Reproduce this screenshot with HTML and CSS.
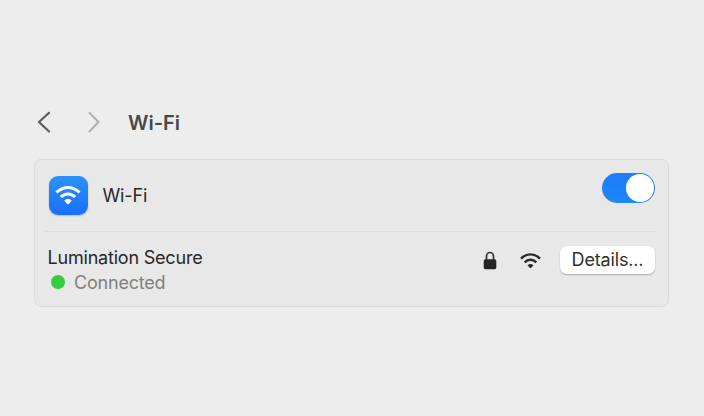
FILE: index.html
```html
<!DOCTYPE html>
<html lang="en">
<head>
<meta charset="utf-8">
<title>Wi-Fi</title>
<link rel="stylesheet" href="styles.css">
</head>
<body>
<main class="pane">
  <header class="header">
    <svg class="chevron" viewBox="0 0 14 22"><path d="M12 1.800 2 11l10 9.500"/></svg>
    <svg class="chevron forward" viewBox="0 0 14 22"><path d="M2.500 1.800 11.500 11 2.500 20.500"/></svg>
    <h1 class="title">Wi-Fi</h1>
  </header>
  <section class="card">
    <div class="row power">
      <div class="app-icon">
        <svg class="wifi" viewBox="0 0 26 20"><path d="M1.500 7.500C8 .7 18 .7 24.500 7.500M5.800 12C10 7.900 16 7.900 20.200 12"/><path class="fill" d="M9.300 15.500Q13 12.200 16.700 15.500L13.900 18.900Q13 19.700 12.100 18.900Z"/></svg>
      </div>
      <span class="label">Wi-Fi</span>
      <div class="toggle"><div class="knob"></div></div>
    </div>
    <div class="row network">
      <div class="info">
        <div class="name">Lumination Secure</div>
        <div class="status"><span class="dot"></span><span class="state">Connected</span></div>
      </div>
      <svg class="lock" viewBox="0 0 14 19"><path d="M3.500 9V5.200a3.500 3.700 0 0 1 7 0V9"/><rect x=".7" y="8.300" width="12.600" height="10" rx="1.700"/></svg>
      <svg class="wifi signal" viewBox="0 0 26 20"><path d="M1.300 7.700C8 .7 18 .7 24.700 7.700M5.800 12.300C10 8 16 8 20.200 12.300"/><path class="fill" d="M9.300 15.900Q13 12.500 16.700 15.900L13.900 19.100Q13 19.900 12.100 19.100Z"/></svg>
      <button class="details">Details...</button>
    </div>
  </section>
</main>
</body>
</html>
```

FILE: styles.css
```css
* { box-sizing: border-box; }
body {
  margin: 0;
  background: #ededed;
  color: #272727;
  font-family: Inter, "Liberation Sans", sans-serif;
}
.pane { width: 704px; height: 416px; padding: 107px 35px 0 33.5px; }
.header { display: flex; align-items: center; height: 30px; padding-left: 3.5px; }
.chevron {
  width: 14px;
  height: 22px;
  fill: none;
  stroke: #5c5c5c;
  stroke-width: 2.2;
  stroke-linecap: round;
  stroke-linejoin: round;
}
.forward { margin-left: 36px; stroke: #adadad; stroke-width: 1.9; }
.title { margin: 2px 0 0 27px; font-size: 20px; line-height: 28px; font-weight: 600; color: #484848; }
.card {
  height: 148px;
  margin-top: 22px;
  padding: 0 12.5px 0 10.5px;
  background: #e8e8e8;
  border: 1px solid #dbdbdb;
  border-radius: 7px;
}
.row { display: flex; }
.power { height: 72px; padding: 13px .5px 0 3.5px; border-bottom: 1px solid #dcdcdc; }
.app-icon {
  display: flex;
  align-items: center;
  justify-content: center;
  width: 39px;
  height: 39px;
  margin-top: 2.5px;
  border-radius: 9px;
  background: linear-gradient(#2b91fb, #1a70fa);
  box-shadow: 0 1px 2px #0003;
}
.wifi { width: 26px; height: 20px; fill: none; stroke: #fff; stroke-width: 3; stroke-linecap: butt; }
.app-icon .wifi { margin-top: -1px; }
.wifi .fill { fill: #fff; stroke: none; }
.label { margin: 9px auto 0 15px; font-size: 18px; line-height: 28px; letter-spacing: -.15px; }
.toggle {
  display: flex;
  justify-content: flex-end;
  width: 53px;
  height: 30px;
  padding: 1px;
  border-radius: 15px;
  background: linear-gradient(#1f7bf8, #1d87fb);
}
.knob { width: 28px; height: 28px; border-radius: 50%; background: #fff; }
.network { padding: 14px .5px 0 2.5px; }
.info { flex: 1; margin-top: -1px; }
.name { font-size: 18px; line-height: 25px; letter-spacing: -.2px; white-space: nowrap; }
.status { display: flex; align-items: center; height: 25px; padding-left: 3.5px; color: #808080; }
.dot { width: 14px; height: 14px; margin-top: -1px; border-radius: 50%; background: #35cb43; }
.state { margin-left: 9px; font-size: 18px; line-height: 25px; letter-spacing: -.2px; }
.lock { width: 14px; height: 19px; margin: 5px 23px 0 0; fill: #242424; }
.lock path { fill: none; stroke: #343434; stroke-width: 1.7; }
.signal { width: 21px; height: 17px; margin: 6px 19px 0 0; stroke: #292929; }
.signal .fill { fill: #292929; }
.details {
  width: 95px;
  height: 28px;
  padding: 0 0 1px;
  border: 0;
  border-radius: 7px;
  background: #fff;
  box-shadow: 0 1px 1.500px #0004;
  color: #303030;
  font: 18px/27px Inter, sans-serif;
  letter-spacing: -.15px;
}
```
